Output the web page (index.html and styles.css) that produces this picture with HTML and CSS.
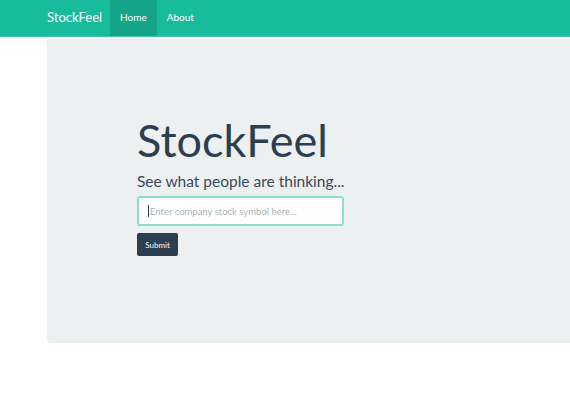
FILE: index.html
```html
<!DOCTYPE html>
<html>
<head>
<meta charset="utf-8">
<link rel="stylesheet" href="styles.css">
</head>
<body>
<nav class="navbar">
  <a class="brand">StockFeel</a>
  <ul class="nav">
    <li class="active"><a>Home</a></li>
    <li><a>About</a></li>
  </ul>
</nav>
<div class="jumbotron">
  <h1 class="title">StockFeel</h1>
  <p class="lead">See what people are thinking...</p>
  <div class="field"><span class="caret"></span><span class="ph">Enter company stock symbol here...</span></div>
  <button class="btn">Submit</button>
</div>
</body>
</html>
```
FILE: styles.css
```css
* { box-sizing: border-box; }
html, body { margin: 0; padding: 0; background: #fff; }
body { font-family: Lato, "Open Sans", sans-serif; color: #2c3e50; }
.navbar {
  height: 37px;
  background: #18bc9c;
  border-bottom: 1px solid #3cc5aa;
  display: flex;
  align-items: stretch;
  padding-left: 47px;
}
.brand {
  color: #fff;
  font-size: 13px;
  display: flex;
  align-items: center;
  width: 63px;
  padding-bottom: 3px;
}
.nav { list-style: none; margin: 0; padding: 0; display: flex; }
.nav li { display: flex; align-items: center; padding: 0 10px 3px; font-size: 10px; color: #fff; }
.nav li.active { background: #15a589; }
.jumbotron {
  margin: 2px 0 0 47px;
  height: 304px;
  background: #ecf0f1;
  border-radius: 0 0 0 4px;
  padding: 74px 0 0 90px;
}
.title {
  margin: 0;
  font-weight: 400;
  font-size: 45px;
  line-height: 54px;
}
.lead {
  margin: 4px 0 0;
  font-size: 15.5px;
  line-height: 20px;
  color: #3a4a5a;
}
.field {
  margin-top: 5px;
  width: 207px;
  height: 30px;
  background: #fff;
  border: 2px solid #8ddfcc;
  border-radius: 3px;
  display: flex;
  align-items: center;
  padding-left: 9px;
  font-size: 9.5px;
  color: #a9b3b8;
}
.caret { width: 1px; height: 12px; background: #2c3e50; margin-right: 1px; }
.btn {
  margin-top: 7px;
  width: 41px;
  height: 23px;
  background: #2c3e50;
  color: #fff;
  border: 0;
  border-radius: 2px;
  font-family: Lato, sans-serif;
  font-size: 8px;
  padding: 0;
  display: block;
}
```
